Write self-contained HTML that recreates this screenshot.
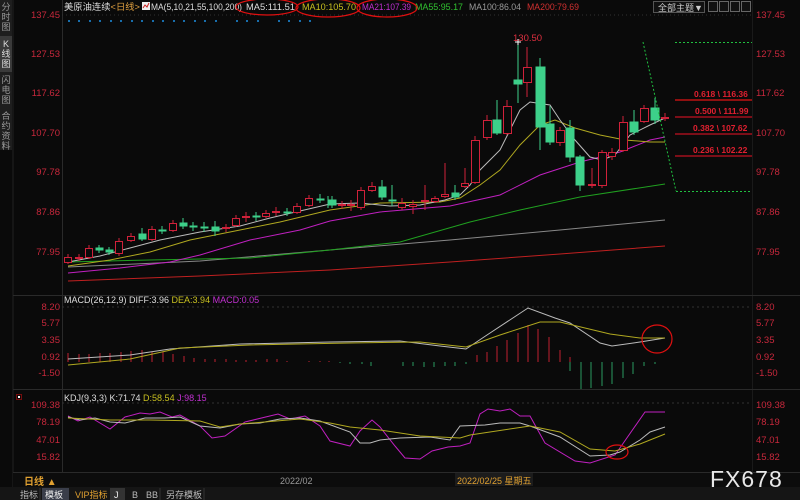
<!DOCTYPE html>
<html><head><meta charset="utf-8"><style>
html,body{margin:0;padding:0;background:#0a0a0a;width:800px;height:500px;overflow:hidden}
svg{display:block;font-family:"Liberation Sans","Noto Sans CJK SC",sans-serif}
</style></head><body>
<svg width="800" height="500" viewBox="0 0 800 500" xmlns="http://www.w3.org/2000/svg">
<rect width="800" height="500" fill="#0a0a0a"/>
<!-- sidebar -->
<rect x="0" y="0" width="12" height="150" fill="#1e1e1e"/>
<rect x="0" y="36" width="12" height="36" fill="#3a3a3a"/>
<g fill="#9a9a9a" font-size="9" text-anchor="middle">
<text x="6" y="10">分</text><text x="6" y="20">时</text><text x="6" y="30">图</text>
<text x="6" y="47" fill="#ddd">K</text><text x="6" y="57" fill="#ddd">线</text><text x="6" y="67" fill="#ddd">图</text>
<text x="6" y="83">闪</text><text x="6" y="93">电</text><text x="6" y="103">图</text>
<text x="6" y="119">合</text><text x="6" y="129">约</text><text x="6" y="139">资</text><text x="6" y="149">料</text>
</g>
<line x1="13" y1="0" x2="13" y2="487" stroke="#222"/>
<line x1="62.5" y1="0" x2="62.5" y2="472" stroke="#2a2a2a"/>
<line x1="752.5" y1="0" x2="752.5" y2="472" stroke="#1a1a1a"/>
<line x1="13" y1="295.5" x2="800" y2="295.5" stroke="#2a2a2a"/>
<line x1="13" y1="389.5" x2="800" y2="389.5" stroke="#2a2a2a"/>
<line x1="13" y1="472.5" x2="800" y2="472.5" stroke="#2a2a2a"/>
<line x1="62" y1="15" x2="752" y2="15" stroke="#333" stroke-dasharray="1,3"/>
<line x1="62" y1="307" x2="752" y2="307" stroke="#333" stroke-dasharray="2,3"/>
<line x1="62" y1="403" x2="752" y2="403" stroke="#333" stroke-dasharray="2,3"/>

<!-- header -->
<g font-size="9">
<text x="64" y="10" fill="#ddd" textLength="76" lengthAdjust="spacingAndGlyphs">美原油连续<tspan fill="#e0a040">&lt;日线&gt;</tspan></text>
<rect x="142" y="2" width="8" height="8" fill="#eee"/><path d="M143 8 L145 5 L147 7 L149 3" stroke="#c22" fill="none"/>
<text x="151" y="10" fill="#ddd" textLength="91" lengthAdjust="spacingAndGlyphs">MA(5,10,21,55,100,200)</text>
<text x="246" y="10" fill="#ddd" textLength="49" lengthAdjust="spacingAndGlyphs">MA5:111.51</text>
<text x="302" y="10" fill="#c8c020" textLength="54" lengthAdjust="spacingAndGlyphs">MA10:105.70</text>
<text x="362" y="10" fill="#c030d0" textLength="49" lengthAdjust="spacingAndGlyphs">MA21:107.39</text>
<text x="415" y="10" fill="#30c030" textLength="48" lengthAdjust="spacingAndGlyphs">MA55:95.17</text>
<text x="469" y="10" fill="#999" textLength="52" lengthAdjust="spacingAndGlyphs">MA100:86.04</text>
<text x="527" y="10" fill="#d03030" textLength="52" lengthAdjust="spacingAndGlyphs">MA200:79.69</text>
</g>
<g fill="none" stroke="#e01010" stroke-width="1.2">
<ellipse cx="267" cy="7" rx="31" ry="8"/><ellipse cx="328" cy="8" rx="32" ry="9"/><ellipse cx="387" cy="8" rx="30" ry="9"/>
</g>
<rect x="653.5" y="1.5" width="51" height="11" fill="#111" stroke="#555"/>
<text x="658" y="11" fill="#ccc" font-size="9">全部主题▼</text>
<g fill="#111" stroke="#666"><rect x="708.5" y="1.5" width="9" height="10"/><rect x="719.5" y="1.5" width="9" height="10"/><rect x="730.5" y="1.5" width="9" height="10"/><rect x="741.5" y="1.5" width="9" height="10"/></g>
<g fill="#1e8ee0"><circle cx="69" cy="21" r="1"/><circle cx="79" cy="21" r="1"/><circle cx="90" cy="21" r="1"/><circle cx="100" cy="21" r="1"/><circle cx="111" cy="21" r="1"/><circle cx="121" cy="21" r="1"/><circle cx="132" cy="21" r="1"/><circle cx="142" cy="21" r="1"/><circle cx="153" cy="21" r="1"/><circle cx="163" cy="21" r="1"/><circle cx="174" cy="21" r="1"/><circle cx="184" cy="21" r="1"/><circle cx="195" cy="21" r="1"/><circle cx="205" cy="21" r="1"/><circle cx="216" cy="21" r="1"/><circle cx="237" cy="21" r="1"/><circle cx="247" cy="21" r="1"/><circle cx="258" cy="21" r="1"/><circle cx="279" cy="21" r="1"/><circle cx="289" cy="21" r="1"/><circle cx="300" cy="21" r="1"/><circle cx="310" cy="21" r="1"/></g>

<!-- axis labels -->
<g fill="#c8283c" font-size="9.5">
<g text-anchor="end"><text x="60" y="18">137.45</text><text x="60" y="57">127.53</text><text x="60" y="96">117.62</text><text x="60" y="136">107.70</text><text x="60" y="175">97.78</text><text x="60" y="215">87.86</text><text x="60" y="255">77.95</text>
<text x="60" y="310">8.20</text><text x="60" y="326">5.77</text><text x="60" y="343">3.35</text><text x="60" y="360">0.92</text><text x="60" y="376">-1.50</text>
<text x="60" y="408">109.38</text><text x="60" y="425">78.19</text><text x="60" y="443">47.01</text><text x="60" y="460">15.82</text></g>
<text x="756" y="18">137.45</text><text x="756" y="57">127.53</text><text x="756" y="96">117.62</text><text x="756" y="136">107.70</text><text x="756" y="175">97.78</text><text x="756" y="215">87.86</text><text x="756" y="255">77.95</text>
<text x="756" y="310">8.20</text><text x="756" y="326">5.77</text><text x="756" y="343">3.35</text><text x="756" y="360">0.92</text><text x="756" y="376">-1.50</text>
<text x="756" y="408">109.38</text><text x="756" y="425">78.19</text><text x="756" y="443">47.01</text><text x="756" y="460">15.82</text>
</g>

<!-- MAs -->
<g fill="none" stroke-width="1">
<polyline stroke="#c02020" points="68,281 200,276 330,270 450,262 560,254 665,246"/>
<polyline stroke="#888" points="68,267 200,261 330,250 450,240 560,230 665,220"/>
<polyline stroke="#20a020" points="68,262 150,260 250,258 330,250 400,242 470,222 520,210 580,197 665,184"/>
<polyline stroke="#c020c0" points="68,273 120,268 170,262 200,255 250,240 300,230 330,221 380,212 450,206 500,195 540,175 580,162 620,152 650,140 665,137"/>
<polyline stroke="#b0a820" points="68,266 110,260 150,252 190,240 230,232 280,222 330,210 380,203 440,202 460,198 480,185 500,170 520,145 540,125 555,120 575,128 600,135 625,140 650,142 665,142"/>
<polyline stroke="#bbb" points="68,262 100,256 130,248 160,240 200,232 240,226 270,218 300,211 330,204 360,203 390,206 420,205 445,200 460,195 470,185 480,170 500,150 520,110 530,102 550,105 560,120 575,140 590,157 602,160 615,155 630,135 650,125 665,118"/>
</g>

<!-- candles: red hollow -->
<g fill="#0a0a0a" stroke="#d0213a" stroke-width="1">
<path d="M68 254V264M79 254V261M89 245V259M119 238V256M131 233V242M152 226V241M173 220V232M226 224V232M236 215V227M246 212V222M266 210V218M276 207V216M297 203V214M309 195V207M342 201V209M351 200V211M361 187V210M372 182V192M402 198V210M413 200V214M425 185V210M435 196V203M445 163V198M465 168V188M475 136V184M487 115V140M507 100V135M527 47V97M560 127V146M592 168V188M602 150V188M612 148V160M623 116V152M644 105V123M665 113V121"/>
<rect x="64.5" y="257.5" width="7" height="5"/><rect x="75.5" y="257.5" width="7" height="1"/><rect x="85.5" y="248.5" width="7" height="9"/><rect x="115.5" y="241.5" width="7" height="12"/><rect x="127.5" y="236.5" width="7" height="4"/><rect x="148.5" y="229.5" width="7" height="10"/><rect x="169.5" y="223.5" width="7" height="7"/><rect x="222.5" y="227.5" width="7" height="1"/><rect x="232.5" y="218.5" width="7" height="7"/><rect x="242.5" y="216.5" width="7" height="1"/><rect x="262.5" y="213.5" width="7" height="3"/><rect x="272.5" y="211.5" width="7" height="1"/><rect x="293.5" y="206.5" width="7" height="6"/><rect x="305.5" y="198.5" width="7" height="7"/><rect x="338.5" y="204.5" width="7" height="1"/><rect x="347.5" y="204.5" width="7" height="1"/><rect x="357.5" y="190.5" width="7" height="17"/><rect x="368.5" y="186.5" width="7" height="4"/><rect x="398.5" y="203.5" width="7" height="4"/><rect x="409.5" y="204.5" width="7" height="2"/><rect x="421.5" y="200.5" width="7" height="1"/><rect x="431.5" y="198.5" width="7" height="3"/><rect x="441.5" y="194.5" width="7" height="2"/><rect x="461.5" y="183.5" width="7" height="3"/><rect x="471.5" y="140.5" width="8" height="42"/><rect x="483.5" y="120.5" width="8" height="17"/><rect x="503.5" y="106.5" width="8" height="27"/><rect x="523.5" y="67.5" width="8" height="15"/><rect x="556.5" y="130.5" width="8" height="12"/><rect x="588.5" y="184.5" width="7" height="1"/><rect x="598.5" y="152.5" width="8" height="33"/><rect x="608.5" y="152.5" width="7" height="4"/><rect x="619.5" y="122.5" width="8" height="28"/><rect x="640.5" y="108.5" width="8" height="13"/><rect x="661.5" y="117.5" width="7" height="1"/>
</g>
<!-- candles: green filled -->
<g fill="#3dd08a" stroke="#3dd08a" stroke-width="1">
<path d="M99 245V253M109 247V255M142 228V241M162 226V234M183 218V229M193 222V231M204 222V232M215 221V236M256 212V221M287 208V216M320 194V203M328 196V208M332 196V208M382 180V200M392 185V206M455 185V200M497 100V135M518 42V103M540 58V150M550 106V145M570 120V162M580 155V191M634 110V135M655 98V124"/>
<rect x="96" y="248" width="7" height="2"/><rect x="106" y="250" width="7" height="2"/><rect x="139" y="234" width="7" height="5"/><rect x="159" y="230" width="7" height="1"/><rect x="180" y="223" width="7" height="3"/><rect x="190" y="226" width="7" height="1"/><rect x="201" y="227" width="7" height="1"/><rect x="212" y="227" width="7" height="4"/><rect x="253" y="216" width="7" height="1"/><rect x="284" y="212" width="7" height="1"/><rect x="317" y="199" width="7" height="1"/><rect x="329" y="200" width="7" height="5"/><rect x="379" y="187" width="7" height="10"/><rect x="389" y="200" width="7" height="1"/><rect x="452" y="193" width="7" height="4"/><rect x="493" y="120" width="8" height="13"/><rect x="514" y="80" width="8" height="4"/><rect x="536" y="67" width="9" height="60"/><rect x="546" y="124" width="8" height="18"/><rect x="566" y="128" width="8" height="29"/><rect x="576" y="157" width="8" height="28"/><rect x="630" y="122" width="8" height="10"/><rect x="651" y="108" width="8" height="12"/>
</g>
<path d="M515 42h6M518 39v6" stroke="#fff"/>
<text x="513" y="41" fill="#e03040" font-size="9.5">130.50</text>

<!-- fib -->
<g stroke="#20c040" stroke-dasharray="2,2" fill="none"><line x1="643" y1="42" x2="676" y2="191"/><line x1="675" y1="42.5" x2="752" y2="42.5"/><line x1="676" y1="191.5" x2="752" y2="191.5"/></g>
<g stroke="#c01020" stroke-width="1.2"><line x1="675" y1="100" x2="752" y2="100" stroke="#901010" stroke-width="2"/><line x1="675" y1="117" x2="752" y2="117"/><line x1="675" y1="134" x2="752" y2="134"/><line x1="675" y1="156" x2="752" y2="156"/></g>
<g fill="#e02030" font-size="8.5" font-weight="bold"><text x="694" y="97">0.618 \ 116.36</text><text x="695" y="114">0.500 \ 111.99</text><text x="693" y="131">0.382 \ 107.62</text><text x="693" y="153">0.236 \ 102.22</text></g>

<!-- MACD -->
<text x="64" y="303" font-size="9" fill="#ddd">MACD(26,12,9) DIFF:3.96 <tspan fill="#c8c020">DEA:3.94</tspan> <tspan fill="#c030d0">MACD:0.05</tspan></text>
<g stroke="#c02030" stroke-width="1">
<path d="M68 362V353M79 362V354M89 362V354M100 362V353M110 362V353M121 362V352M131 362V351M142 362V350M152 362V352M163 362V352M173 362V354M184 362V356M194 362V358M205 362V359M215 362V359M226 362V359M236 362V360M246 362V360M256 362V360M267 362V359M277 362V359M287 362V361M309 362V361M320 362V361M329 362V361M477 362V355M487 362V352M497 362V346M507 362V340M518 362V333M528 362V325M538 362V329M549 362V337M560 362V350M570 362V357"/>
</g>
<g stroke="#2a9a60" stroke-width="1">
<path d="M340 362V363M350 362V364M362 362V364M371 362V366M403 362V366M413 362V366M424 362V367M434 362V367M445 362V366M455 362V366M466 362V364M570 362V371M581 362V389M591 362V388M602 362V386M612 362V384M623 362V378M633 362V374M644 362V366M655 362V364"/>
</g>
<polyline fill="none" stroke="#bbb" points="68,359 130,355 170,349 240,344 330,342 400,341 440,346 466,349 487,335 528,308 555,318 570,323 600,343 612,346 640,342 665,338"/>
<polyline fill="none" stroke="#b0a820" points="68,365 130,359 180,348 250,345 350,343 420,342 466,347 500,335 540,322 560,322 610,334 640,338 665,338"/>
<ellipse cx="657" cy="339" rx="15" ry="14" fill="none" stroke="#e01010" stroke-width="1.2"/>

<!-- KDJ -->
<rect x="16.5" y="394.5" width="5" height="5" fill="none" stroke="#e01010" stroke-dasharray="1,1"/><rect x="18" y="396" width="2" height="2" fill="#fff"/>
<text x="64" y="401" font-size="9" fill="#ddd">KDJ(9,3,3) K:71.74 <tspan fill="#c8c020">D:58.54</tspan> <tspan fill="#c030d0">J:98.15</tspan></text>
<polyline fill="none" stroke="#c020c0" points="68,416 78,421 90,417 110,429 125,417 140,413 150,414 160,412 172,417 180,415 200,426 212,438 225,436 245,422 278,414 290,419 305,416 320,426 330,441 350,446 360,431 372,420 380,427 395,446 405,458 420,459 432,451 448,447 460,446 470,443 480,414 488,409 500,411 510,409 520,416 530,416 545,443 575,461 590,463 615,455 645,412 665,412"/>
<polyline fill="none" stroke="#bbb" points="68,417 80,420 95,418 110,422 125,423 145,418 165,418 180,417 200,426 220,428 240,424 260,423 280,419 300,418 320,421 350,432 360,443 370,443 380,440 400,438 430,437 450,440 460,426 485,425 500,423 520,423 530,426 560,437 590,456 610,455 620,452 640,440 650,432 665,427"/>
<polyline fill="none" stroke="#b0a820" points="68,418 110,420 150,420 200,421 220,427 240,424 300,419 330,423 350,427 380,430 420,436 440,437 460,438 470,435 530,426 560,432 590,449 615,451 640,444 665,434"/>
<ellipse cx="617" cy="452" rx="11" ry="7" fill="none" stroke="#e01010" stroke-width="1.2"/>

<!-- date bar -->
<rect x="13" y="473" width="787" height="14" fill="#0c0c0c"/>
<text x="24" y="485" fill="#e0a030" font-size="10" font-weight="bold">日线 ▲</text>
<text x="280" y="484" fill="#999" font-size="9">2022/02</text>
<rect x="455" y="473" width="78" height="13" fill="#1c1c1c"/>
<text x="457" y="484" fill="#e0a030" font-size="9">2022/02/25 星期五</text>
<text x="710" y="487" fill="#e8e8e8" font-size="23" letter-spacing="1">FX678</text>

<!-- bottom tabs -->
<rect x="0" y="487" width="800" height="13" fill="#151515"/>
<rect x="42" y="488" width="27" height="12" fill="#3a3e4a"/>
<rect x="110" y="488" width="15" height="12" fill="#333"/>
<g font-size="9" fill="#bbb"><text x="20" y="498">指标</text><text x="45" y="498" fill="#eee">模板</text><text x="75" y="498" fill="#e0a030">VIP指标</text><text x="114" y="498" fill="#eee">J</text><text x="132" y="498">B</text><text x="146" y="498">BB</text><text x="166" y="498">另存模板</text></g>
<g stroke="#333"><line x1="40" y1="488" x2="40" y2="500"/><line x1="160" y1="488" x2="160" y2="500"/><line x1="204" y1="488" x2="204" y2="500"/></g>
</svg>
</body></html>
